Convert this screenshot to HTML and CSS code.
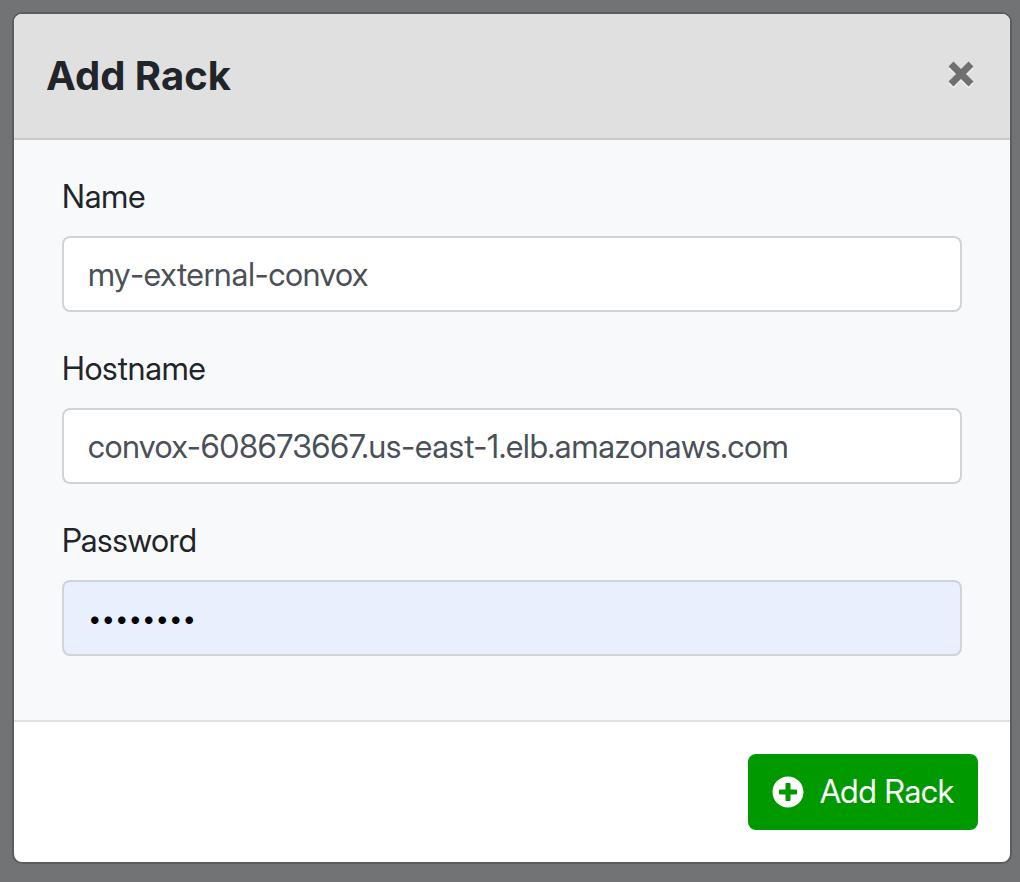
FILE: index.html
```html
<!DOCTYPE html>
<html lang="en">
<head>
<meta charset="utf-8">
<title>Add Rack</title>
<link rel="stylesheet" href="styles.css">
</head>
<body>
<form class="modal" role="dialog" aria-labelledby="title">
  <header class="modal-header">
    <h1 class="modal-title" id="title">Add Rack</h1>
    <button class="close" type="button" aria-label="Close">
      <svg viewBox="0 0 26 26" aria-hidden="true"><path d="M3 3L23 23M23 3L3 23"/></svg>
    </button>
  </header>
  <div class="modal-body">
    <div class="field">
      <label for="name">Name</label>
      <input id="name" type="text" value="my-external-convox">
    </div>
    <div class="field">
      <label for="host">Hostname</label>
      <input id="host" type="text" value="convox-608673667.us-east-1.elb.amazonaws.com">
    </div>
    <div class="field">
      <label for="password">Password</label>
      <input class="filled" id="password" type="password" value="password">
    </div>
  </div>
  <footer class="modal-footer">
    <button class="submit" type="button">
      <svg viewBox="0 0 512 512" aria-hidden="true"><path d="M256 8C119 8 8 119 8 256s111 248 248 248 248-111 248-248S393 8 256 8zm144 276c0 6.600-5.400 12-12 12h-92v92c0 6.600-5.400 12-12 12h-56c-6.600 0-12-5.400-12-12v-92h-92c-6.600 0-12-5.400-12-12v-56c0-6.600 5.400-12 12-12h92v-92c0-6.600 5.400-12 12-12h56c6.600 0 12 5.400 12 12v92h92c6.600 0 12 5.400 12 12v56z"/></svg>
      <span>Add Rack</span>
    </button>
  </footer>
</form>
</body>
</html>
```
FILE: styles.css
```css
* { box-sizing: border-box; }
body {
  margin: 0;
  padding: 12px 8px 18px 12px;
  min-height: 100vh;
  background: #727375;
  color: #212529;
  font: 32px/48px "Inter Display", Roboto, "Liberation Sans", sans-serif;
}
.modal {
  border: 2px solid #5b5c5e;
  border-radius: 10px;
  background: #fff;
  overflow: hidden;
}
.modal-header {
  display: flex;
  align-items: center;
  justify-content: space-between;
  padding: 32px;
  border-bottom: 2px solid #c8cacc;
  background: #e0e0e0;
}
.modal-title {
  margin: 0;
  font-family: Inter, "Liberation Sans", sans-serif;
  font-size: 40px;
  line-height: 60px;
  font-weight: 700;
}
.close {
  display: flex;
  padding: 0 4px 4px;
  border: 0;
  background: none;
}
.close svg {
  width: 26px;
  height: 26px;
  fill: none;
  stroke: #707070;
  stroke-width: 7;
  filter: drop-shadow(0 2px 0 #fff8);
}
.modal-body {
  display: grid;
  gap: 32px;
  padding: 32px 48px 64px;
  background: #f8f9fb;
}
.field { display: grid; gap: 14px; }
label { line-height: 50px; }
input {
  width: 100%;
  height: 76px;
  padding: 12px 24px;
  border: 2px solid #ced4da;
  border-radius: 8px;
  background: #fff;
  color: #495057;
  font: inherit;
}
.filled {
  background: #e8f0fe;
  color: #000;
  font-family: Inter, "Liberation Sans", sans-serif;
  font-size: 24px;
}
.modal-footer {
  display: flex;
  justify-content: flex-end;
  padding: 32px;
  border-top: 2px solid #dee2e6;
}
.submit {
  display: flex;
  align-items: center;
  gap: 16px;
  height: 76px;
  padding: 0 24px;
  border: 0;
  border-radius: 8px;
  background: #090;
  color: #fff;
  font: inherit;
  line-height: 50px;
}
.submit svg { width: 32px; height: 32px; fill: currentColor; }
```
